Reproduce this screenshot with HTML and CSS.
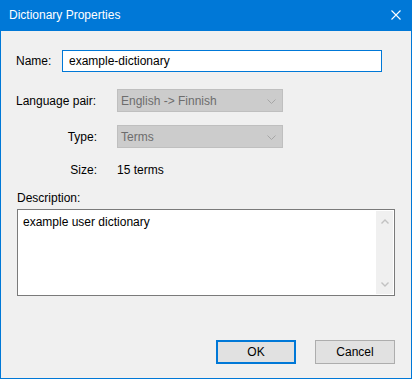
FILE: index.html
```html
<!DOCTYPE html>
<html>
<head>
<meta charset="utf-8">
<title>Dictionary Properties</title>
<link rel="stylesheet" href="styles.css">
</head>
<body>
<div class="window">
  <div class="titlebar">
    <span class="title">Dictionary Properties</span>
    <svg class="close" width="10" height="10" viewBox="0 0 10 10"><path d="M0.5 0.5 L9.5 9.5 M9.5 0.5 L0.5 9.5" stroke="#fff" stroke-width="1.1" fill="none"/></svg>
  </div>
  <div class="content">
    <div class="row row-name">
      <span class="label label-name">Name:</span>
      <div class="input">example-dictionary</div>
    </div>
    <div class="row row-lang">
      <span class="label label-left">Language pair:</span>
      <div class="combo"><span>English -&gt; Finnish</span><svg class="chev" width="9" height="5" viewBox="0 0 9 5"><path d="M0.5 0.5 L4.5 4.5 L8.5 0.5" stroke="#a6a6a6" stroke-width="1" fill="none"/></svg></div>
    </div>
    <div class="row row-type">
      <span class="label label-right">Type:</span>
      <div class="combo"><span>Terms</span><svg class="chev" width="9" height="5" viewBox="0 0 9 5"><path d="M0.5 0.5 L4.5 4.5 L8.5 0.5" stroke="#a6a6a6" stroke-width="1" fill="none"/></svg></div>
    </div>
    <div class="row row-size">
      <span class="label label-right">Size:</span>
      <span class="value">15 terms</span>
    </div>
    <div class="desc-label">Description:</div>
    <div class="textarea">
      <div class="ta-text">example user dictionary</div>
      <div class="scrollbar">
        <svg width="8" height="5" viewBox="0 0 8 5"><path d="M0.5 4.5 L4 1 L7.5 4.5" stroke="#c2c2c2" stroke-width="1.4" fill="none"/></svg>
        <svg width="8" height="5" viewBox="0 0 8 5"><path d="M0.5 0.5 L4 4 L7.5 0.5" stroke="#c2c2c2" stroke-width="1.4" fill="none"/></svg>
      </div>
    </div>
    <div class="buttons">
      <div class="btn btn-default">OK</div>
      <div class="btn">Cancel</div>
    </div>
  </div>
</div>
</body>
</html>
```
FILE: styles.css
```css
html, body {
  margin: 0;
  padding: 0;
  background: #f0f0f0;
}
body {
  font-family: "Liberation Sans", Arial, sans-serif;
  font-size: 12px;
  color: #000;
}
.window {
  width: 412px;
  height: 379px;
  box-sizing: border-box;
  border: 1px solid #0078d7;
  border-top: 0;
  background: #f0f0f0;
  display: flex;
  flex-direction: column;
}
.titlebar {
  height: 31px;
  background: #0078d7;
  display: flex;
  align-items: center;
  justify-content: space-between;
  padding: 0 10px 0 8px;
  flex: none;
}
.title {
  color: #fff;
  font-size: 12px;
  line-height: 16px;
  padding-bottom: 1px;
}
.close {
  display: block;
  margin-bottom: 1px;
}
.content {
  flex: 1;
  display: flex;
  flex-direction: column;
  padding: 0 16px 0 15px;
}
.row {
  display: flex;
  align-items: center;
}
.row-name {
  margin-top: 19px;
  height: 22px;
}
.label-name {
  width: 46px;
  flex: none;
}
.input {
  width: 320px;
  height: 22px;
  box-sizing: border-box;
  border: 1px solid #0078d7;
  background: #fff;
  padding-left: 6px;
  line-height: 20px;
}
.row-lang {
  margin-top: 17px;
  height: 23px;
}
.row-type {
  margin-top: 13px;
  height: 23px;
}
.label-left {
  width: 101px;
  flex: none;
}
.label-right {
  width: 81px;
  text-align: right;
  margin-right: 20px;
  flex: none;
}
.combo {
  width: 166px;
  height: 23px;
  box-sizing: border-box;
  border: 1px solid #bfbfbf;
  background: #cccccc;
  color: #6d6d6d;
  display: flex;
  align-items: center;
  justify-content: space-between;
  padding: 0 6px 0 3px;
}
.chev {
  display: block;
  margin-top: 2px;
}
.row-size {
  margin-top: 14px;
  height: 16px;
}
.desc-label {
  margin-top: 12px;
  margin-left: 1px;
  height: 16px;
  line-height: 16px;
}
.textarea {
  margin-top: 3px;
  margin-left: 1px;
  height: 87px;
  box-sizing: border-box;
  border: 1px solid #7a7a7a;
  background: #fff;
  padding: 1px;
  display: flex;
}
.ta-text {
  flex: 1;
  padding: 4px 0 0 4px;
  line-height: 14px;
}
.scrollbar {
  width: 17px;
  background: #f0f0f0;
  display: flex;
  flex-direction: column;
  align-items: center;
  justify-content: space-between;
  padding: 8px 0 7px;
  box-sizing: border-box;
}
.scrollbar svg {
  display: block;
}
.buttons {
  margin-top: 44px;
  display: flex;
  justify-content: flex-end;
  gap: 19px;
}
.btn {
  width: 80px;
  height: 24px;
  box-sizing: border-box;
  border: 1px solid #adadad;
  background: #e1e1e1;
  text-align: center;
  line-height: 22px;
}
.btn-default {
  border: 2px solid #0078d7;
  line-height: 20px;
}
```
